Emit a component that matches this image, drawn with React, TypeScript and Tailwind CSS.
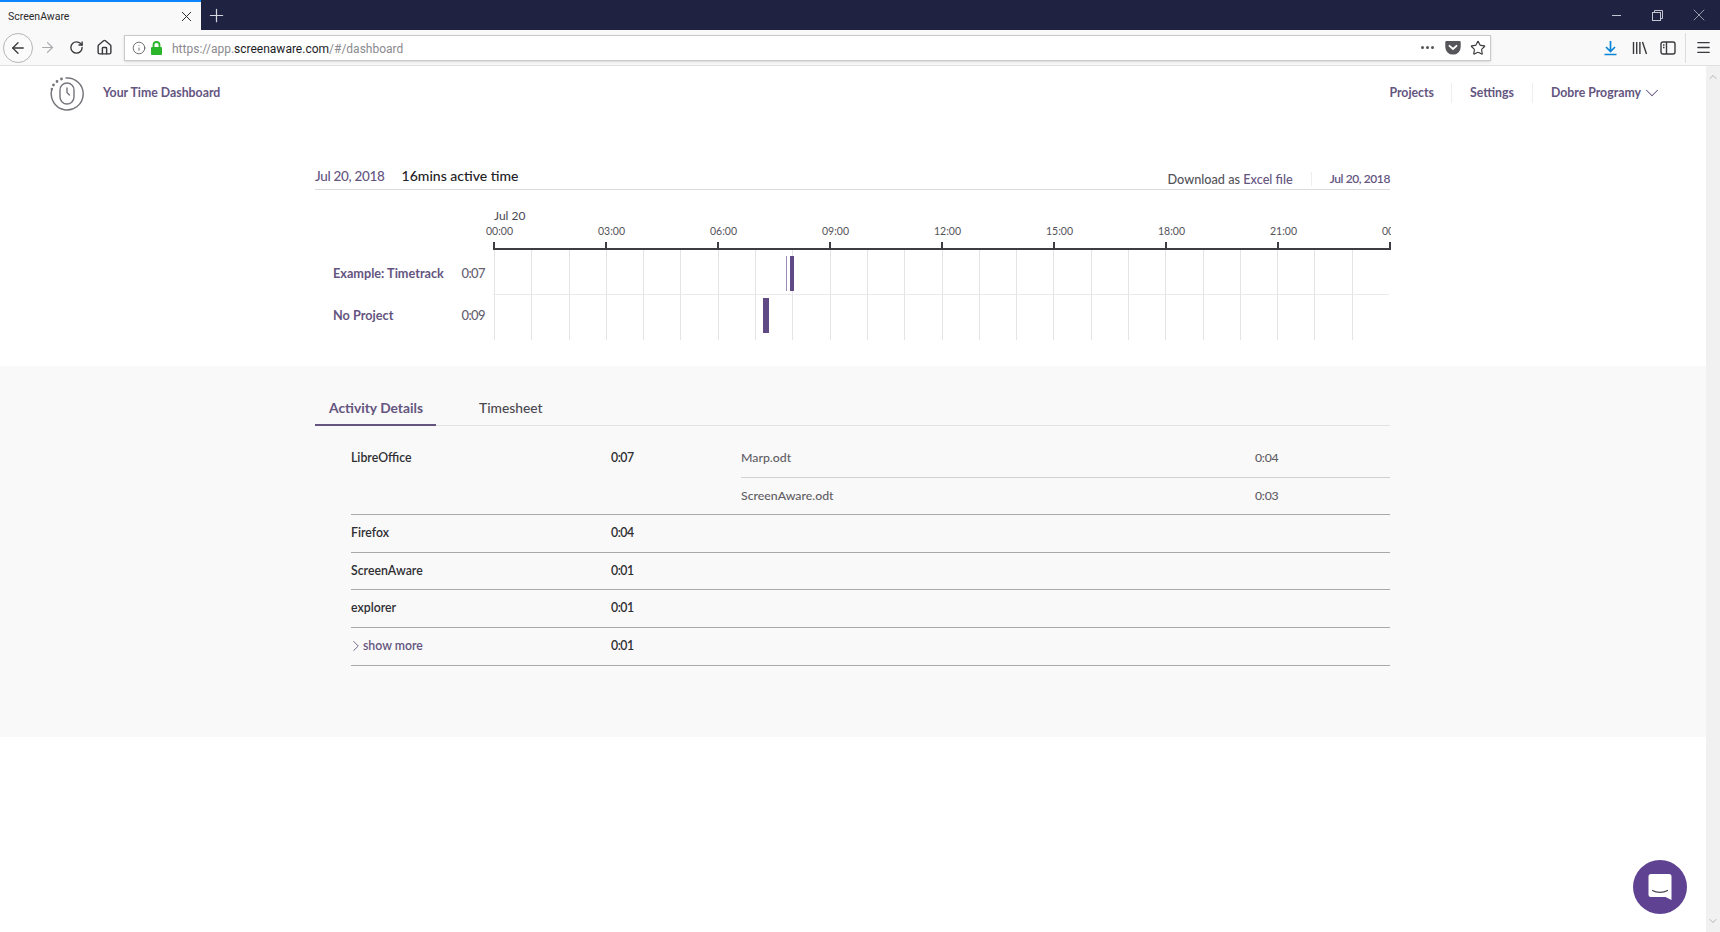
import type { ReactNode } from 'react';
import { ArrowLeft, ArrowRight, RotateCw, House, Info, Star, X, Plus, ChevronDown, ChevronUp, ChevronRight, Menu } from 'lucide-react';

const hours = ['00:00', '03:00', '06:00', '09:00', '12:00', '15:00', '18:00', '21:00', '00:00'];
const hourCells = Array.from({ length: 24 }, (_, i) => i);

function Logo() {
  return (
    <svg width="36" height="36" viewBox="0 0 36 36" fill="none" stroke="#77757c" strokeWidth="1.4" strokeLinecap="round">
      <path d="M17 3 A16 16 0 1 1 3 14" strokeWidth="1.5" />
      <rect x="11" y="8" width="14" height="21" rx="7" />
      <path d="M18 13v4.5l2.4 2.5" />
      <circle cx="12.5" cy="4" r="0.7" fill="#77757c" />
      <circle cx="8" cy="6.5" r="0.7" fill="#77757c" />
      <circle cx="4.5" cy="10" r="0.7" fill="#77757c" />
      <circle cx="2.8" cy="14" r="0.5" fill="#77757c" />
    </svg>
  );
}

function BrowserChrome() {
  return (
    <div className="shrink-0 font-['Roboto',sans-serif]">
      <div className="flex h-[30px] bg-[#1f2240]">
        <div className="flex h-[31px] w-[201px] items-center justify-between border-t-2 border-[#0a84ff] bg-[#f9f9fa] pl-[8px] pr-[6px] text-[10.5px] text-[#2b2b2b]">
          <span>ScreenAware</span>
          <X size={17} strokeWidth={1.4} />
        </div>
        <div className="flex w-[30px] items-center justify-center text-[#d6d6de]">
          <Plus size={21} strokeWidth={1.4} />
        </div>
        <div className="flex flex-1 items-center justify-end text-[#c4c5d0]">
          <div className="flex w-[41px] justify-center"><div className="h-px w-[9px] bg-[#c4c5d0]" /></div>
          <div className="flex w-[41px] justify-center">
            <svg width="11" height="11" viewBox="0 0 11 11" fill="none" stroke="currentColor">
              <rect x="0.5" y="2.5" width="8" height="8" />
              <path d="M2.5 2.5v-2h8v8h-2" />
            </svg>
          </div>
          <div className="flex w-[42px] justify-center"><X size={20} strokeWidth={0.9} /></div>
        </div>
      </div>
      <div className="flex h-[36px] items-center border-b border-[#e0e0e2] bg-[#f9f9fa] text-[#3a3a3e]">
        <div className="ml-[3px] flex h-[30px] w-[30px] items-center justify-center rounded-full border border-[#b5b5b8] bg-[#fbfbfb]">
          <ArrowLeft size={18} strokeWidth={1.7} />
        </div>
        <ArrowRight size={17} strokeWidth={1.6} className="ml-[6px] text-[#a8a8ad]" />
        <RotateCw size={15} strokeWidth={2.2} className="ml-[13px]" />
        <House size={17} strokeWidth={2} className="ml-[12px]" />
        <div className="ml-[11px] flex h-[26px] w-[1367px] items-center border border-[#c9c9cc] bg-white pl-[7px] pr-[4px] shadow-sm">
          <Info size={14} strokeWidth={1.4} className="text-[#55555a]" />
          <svg width="13" height="14" viewBox="0 0 13 14" className="ml-[4px]">
            <rect x="1" y="6" width="11" height="8" rx="1" fill="#2bb52b" />
            <path d="M3.5 6.500V4a3 3 0 0 1 6 0v2.500" fill="none" stroke="#2bb52b" strokeWidth="1.800" />
          </svg>
          <span className="ml-[9px] pt-[2px] text-[12px] text-[#8a8a8e]">
            https://app.<span className="text-[#1c1c1f]">screenaware.com</span>/#/dashboard
          </span>
          <div className="flex-1" />
          <span className="flex gap-[2px]">
            <span className="h-[3px] w-[3px] rounded-full bg-[#55555a]" />
            <span className="h-[3px] w-[3px] rounded-full bg-[#55555a]" />
            <span className="h-[3px] w-[3px] rounded-full bg-[#55555a]" />
          </span>
          <svg width="16" height="15" viewBox="0 0 16 15" className="ml-[11px]">
            <path d="M1.5 1h13a1.2 1.2 0 0 1 1.2 1.2V7A7.6 7.6 0 0 1 8 14.6 7.6 7.6 0 0 1 .3 7V2.2A1.2 1.2 0 0 1 1.5 1z" fill="#55555a" />
            <path d="M4.5 5.8 8 9l3.5-3.2" fill="none" stroke="#fff" strokeWidth="1.8" strokeLinecap="round" />
          </svg>
          <Star size={16} strokeWidth={1.7} className="ml-[9px] text-[#3a3a3e]" />
        </div>
        <svg width="15" height="16" viewBox="0 0 15 16" className="ml-[112px]" fill="none" stroke="#0a84d6" strokeWidth="1.7">
          <path d="M7.5 1v10M3 7l4.5 4.5L12 7M1.5 14.5h12" />
        </svg>
        <svg width="16" height="14" viewBox="0 0 16 14" className="ml-[14px]" fill="none" stroke="#3a3a3e" strokeWidth="1.4">
          <path d="M1.5 1v12M4.7 1v12M7.9 1v12M10.5 1l4 12" />
        </svg>
        <svg width="16" height="14" viewBox="0 0 16 14" className="ml-[12px]" fill="none" stroke="#3a3a3e" strokeWidth="1.4">
          <rect x="1" y="1" width="14" height="12" rx="2" />
          <path d="M6.5 1v12M3 4h1.5M3 6.5h1.5" />
        </svg>
        <div className="ml-[9px] h-[30px] w-px bg-[#dcdcde]" />
        <Menu size={17} strokeWidth={1.8} className="ml-[9px]" />
      </div>
    </div>
  );
}

function Timeline() {
  return (
    <div className="flex">
      <div className="w-[178px] pt-[63px] text-[12.7px] font-bold text-[#64557f]">
        <div className="flex h-[42px] items-center justify-between pl-[18px] pr-[8px]">
          <span>Example: Timetrack</span>
          <span className="text-[13px] font-medium tracking-[-0.6px] text-[#655f70]">0:07</span>
        </div>
        <div className="flex h-[42px] items-center justify-between pl-[18px] pr-[8px]">
          <span>No Project</span>
          <span className="text-[13px] font-medium tracking-[-0.6px] text-[#655f70]">0:09</span>
        </div>
      </div>
      <div className="relative w-[896px]">
        <div className="h-[33px] pl-px pt-[18px] text-[12px] leading-[16px] text-[#4a4850]">Jul 20</div>
        <div className="-ml-[7px] flex h-[20px] w-[905px] overflow-hidden text-[10.5px] leading-[16px] text-[#55535a]">
          {hours.map((h, i) => (
            <div key={i} className="w-[112px] shrink-0">{h}</div>
          ))}
        </div>
        <div className="-mt-[1px] flex h-[8px] w-[898px] border-b-2 border-[#3e3e42]">
          {hours.slice(0, 8).map((h, i) => (
            <div key={i} className="h-[8px] w-[112px] border-l-2 border-[#3e3e42]" />
          ))}
          <div className="h-[8px] border-l-2 border-[#3e3e42]" />
        </div>
        <div className="grid h-[45px] grid-cols-[repeat(24,minmax(0,1fr))] border-b border-[#eaeaec] pl-px">
          {hourCells.map((i) => (
            <div key={i} className="border-l border-[#e4e4e6]" />
          ))}
        </div>
        <div className="grid h-[45px] grid-cols-[repeat(24,minmax(0,1fr))] pl-px">
          {hourCells.map((i) => (
            <div key={i} className="border-l border-[#e4e4e6]" />
          ))}
        </div>
        <div className="absolute left-[293px] top-[66px] h-[35px] w-px bg-[#9c8db8]" />
        <div className="absolute left-[297px] top-[66px] h-[35px] w-[4px] bg-[#5f4a85]" />
        <div className="absolute left-[270px] top-[108px] h-[35px] w-[6px] bg-[#5f4a85]" />
      </div>
    </div>
  );
}

function AppRow({ name, time, files }: { name: ReactNode; time: string; files?: [string, string][] }) {
  return (
    <div className="flex border-b border-[#a9a9ab]">
      <div className="flex h-[36.6px] w-[260px] items-center text-[#2f2f33]">{name}</div>
      <div className="flex h-[36.6px] w-[130px] items-center tracking-[-0.5px] text-[#2f2f33]">{time}</div>
      {files && (
        <div className="flex-1">
          {files.map((f, i) => (
            <div key={f[0]} className={i < files.length - 1 ? 'flex h-[37.6px] items-center border-b border-[#d0d0d2] font-medium text-[#5f5d64]' : 'flex h-[36.6px] items-center font-medium text-[#5f5d64]'}>
              <span className="w-[514px]">{f[0]}</span>
              <span className="tracking-[-0.3px]">{f[1]}</span>
            </div>
          ))}
        </div>
      )}
    </div>
  );
}

export default function App() {
  return (
    <div className="relative flex h-[932px] w-full flex-col overflow-hidden bg-white">
      <BrowserChrome />
      <div className="flex min-h-0 flex-1 font-['Lato',sans-serif]">
        <div className="min-w-0 flex-1">
          <header className="flex h-[54px] items-center pl-[49px] text-[12.3px] font-bold text-[#64557f]">
            <div className="mt-[-1px]"><Logo /></div>
            <span className="ml-[18px]">Your Time Dashboard</span>
            <div className="flex-1" />
            <span>Projects</span>
            <div className="ml-[17px] h-[20px] w-px bg-[#eeeef0]" />
            <span className="ml-[18px]">Settings</span>
            <div className="ml-[18px] h-[20px] w-px bg-[#eeeef0]" />
            <span className="ml-[18px]">Dobre Programy</span>
            <ChevronDown size={22} strokeWidth={1.1} className="mr-[43px]" />
          </header>

          <section className="h-[246px] pl-[315px] pr-[316px]">
            <div className="flex h-[70px] items-end justify-between border-b border-[#dcdce0]">
              <div className="flex items-baseline pb-[3px]">
                <span className="text-[13.5px] font-medium tracking-[-0.3px] text-[#64557f]">Jul 20, 2018</span>
                <span className="ml-[17px] text-[14px] font-medium text-[#222226]">16mins active time</span>
              </div>
              <div className="flex items-center text-[12.7px] font-medium">
                <span className="text-[#55535a]">Download as <span className="text-[#64557f]">Excel file</span></span>
                <div className="ml-[18px] h-[14px] w-px bg-[#eeeef0]" />
                <span className="ml-[18px] text-[12px] font-semibold tracking-[-0.4px] text-[#64557f]">Jul 20, 2018</span>
              </div>
            </div>
            <Timeline />
          </section>

          <section className="h-[371px] bg-[#f9f9f9] pl-[315px] pr-[316px]">
            <div className="flex h-[60px] items-end border-b border-[#e4e4e6] text-[13.8px]">
              <div className="-mb-px flex h-[30px] w-[121px] items-center border-b-2 border-[#64557f] pb-[3px] pl-[14px] font-bold text-[#64557f]">
                Activity Details
              </div>
              <div className="flex h-[30px] items-center pb-[3px] pl-[43px] font-medium text-[#4a4850]">Timesheet</div>
            </div>
            <div className="ml-[36px] mt-[14px] text-[12.3px] font-semibold">
              <AppRow name="LibreOffice" time="0:07" files={[['Marp.odt', '0:04'], ['ScreenAware.odt', '0:03']]} />
              <AppRow name="Firefox" time="0:04" />
              <AppRow name="ScreenAware" time="0:01" />
              <AppRow name="explorer" time="0:01" />
              <AppRow
                name={<><ChevronRight size={18} strokeWidth={1.2} className="-ml-[4px] -mr-[2px] text-[#64557f]" /><span className="text-[#64557f]">show more</span></>}
                time="0:01"
              />
            </div>
          </section>
        </div>
        <div className="flex w-[14px] shrink-0 flex-col items-center justify-between bg-[#f1f1f1] py-[5px] text-[#b4b4b6]">
          <ChevronUp size={12} strokeWidth={2} />
          <ChevronDown size={12} strokeWidth={2} />
        </div>
      </div>
      <div className="absolute left-[1633px] top-[860px] flex h-[54px] w-[54px] items-center justify-center rounded-full bg-[#5f4392]">
        <svg width="24" height="28" viewBox="0 0 24 28">
          <path d="M3 1h18a2.5 2.5 0 0 1 2.5 2.5V27l-6-3H3A2.5 2.5 0 0 1 .5 21.5v-18A2.5 2.5 0 0 1 3 1z" fill="#fff" />
          <path d="M4.5 17.5c4 2.5 11 2.5 15 0" fill="none" stroke="#4a4a55" strokeWidth="1.2" strokeLinecap="round" />
        </svg>
      </div>
    </div>
  );
}
